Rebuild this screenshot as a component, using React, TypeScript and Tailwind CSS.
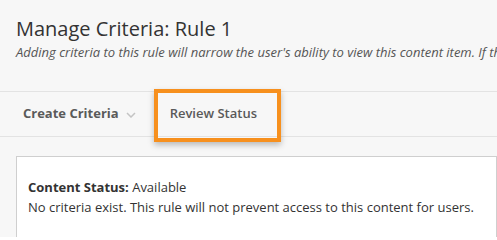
import React from 'react';

const font = { fontFamily: '"Open Sans", "Liberation Sans", sans-serif' };

export default function App() {
  return (
    <div
      className="w-[497px] h-[237px] overflow-hidden bg-[#f7f7f7] text-[#333]"
      style={font}
    >
      {/* Page header */}
      <div className="pl-4 pt-[15px] whitespace-nowrap">
        <h1 className="text-[20px] leading-[28px] text-[#333]">Manage Criteria: Rule 1</h1>
        <p className="text-[13px] leading-[18px] italic text-[#555]">
          Adding criteria to this rule will narrow the user's ability to view this content item. If the
        </p>
      </div>

      {/* Action bar */}
      <div className="mt-[30px] h-[46px] border-y border-[#e3e3e3] flex items-center pl-[23px] relative">
        <button className="flex items-center gap-[7px] text-[13px] font-bold text-[#5a5a5a]">
          Create Criteria
          <svg width="10" height="6" viewBox="0 0 10 6" className="mt-[1px]">
            <path d="M1 1l4 4 4-4" fill="none" stroke="#c4c4c4" strokeWidth="1.5" />
          </svg>
        </button>
        <button className="ml-[34px] text-[13px] font-semibold text-[#5a5a5a]">Review Status</button>
        {/* highlight overlay */}
        <div className="absolute left-[154px] top-[-3px] w-[127px] h-[53px] border-4 border-[#f7901e] shadow-[0_3px_6px_rgba(0,0,0,0.25)]" />
      </div>

      {/* Content panel */}
      <div className="ml-4 mt-[19px] bg-white border border-[#cfcfcf] h-[100px] pl-[11px] pt-[21px] text-[13px] leading-[19.5px] whitespace-nowrap">
        <p>
          <span className="font-bold">Content Status:</span> Available
        </p>
        <p>No criteria exist. This rule will not prevent access to this content for users.</p>
      </div>
    </div>
  );
}
